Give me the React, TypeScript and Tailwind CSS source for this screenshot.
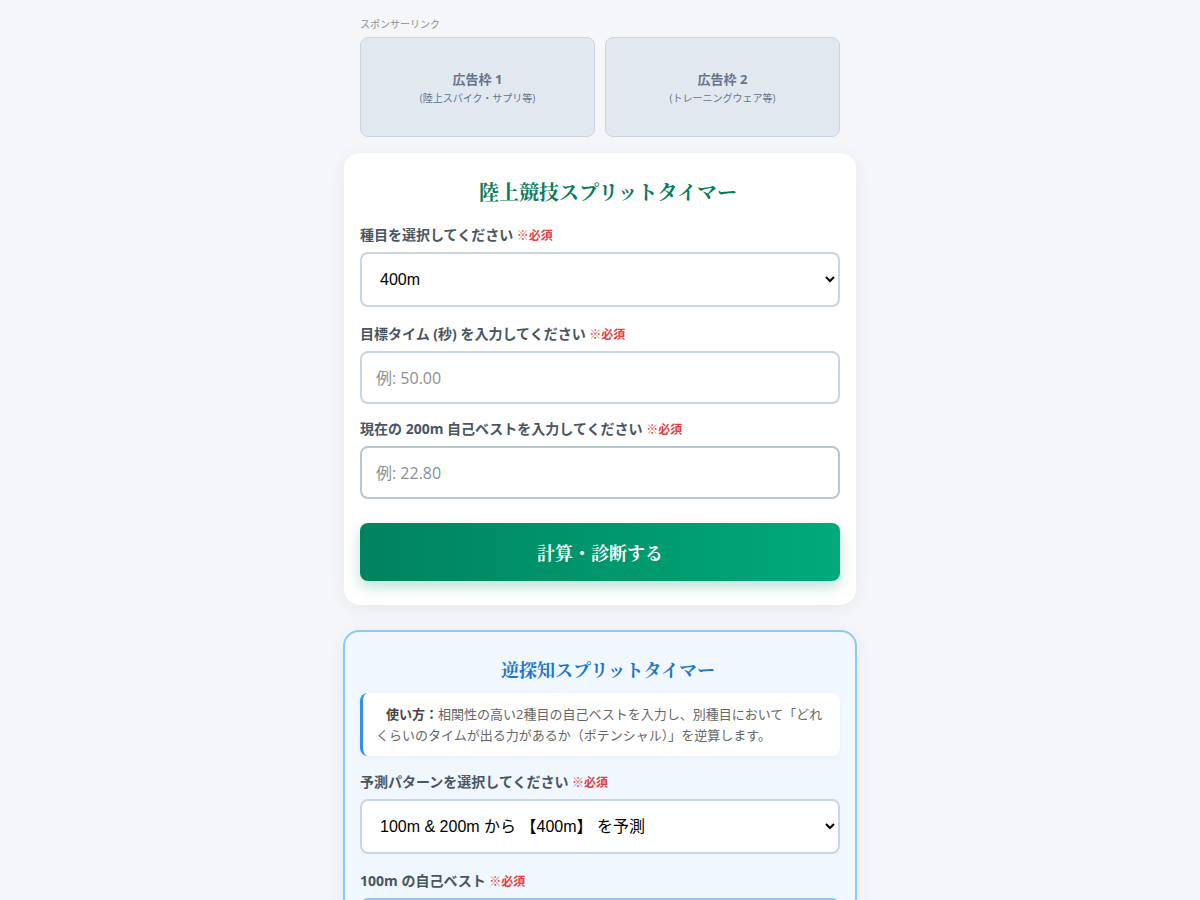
import { useState } from 'react';

const sans = "font-['Open_Sans','Noto_Sans_CJK_JP',sans-serif]";
const serif = "font-['Noto_Serif_CJK_JP','DejaVu_Serif','Noto_Sans_CJK_JP',serif]";

function Required() {
  return <span className="text-[12px] font-bold text-[#e53e3e]">※必須</span>;
}

function Label({ children }: { children: React.ReactNode }) {
  return (
    <label className="mb-[6px] block text-[14px] font-bold leading-[20px] text-[#4a5562]">
      {children} <Required />
    </label>
  );
}

function AdSlot({ title, sub }: { title: string; sub: string }) {
  return (
    <div className="flex h-[100px] flex-1 flex-col items-center justify-center rounded-lg border border-[#cbd5e1] bg-[#e2e8f0]">
      <div className="text-[13px] font-bold leading-[20px] text-[#64748b]">{title}</div>
      <div className="mt-[2px] text-[10px] leading-[14px] text-[#64748b]">{sub}</div>
    </div>
  );
}

export default function App() {
  const [event, setEvent] = useState('400m');
  const [target, setTarget] = useState('');
  const [pb200, setPb200] = useState('');
  const [pattern, setPattern] = useState('400');
  const [pb100, setPb100] = useState('');
  const [pb2, setPb2] = useState('');

  const fieldClass =
    "h-[53px] w-full rounded-lg border-2 bg-white px-[14px] text-[16px] text-[#333] outline-none placeholder:text-[#8a8f96]";
  const selectClass =
    "h-[55px] w-full rounded-lg border-2 border-[#cbd5e1] bg-white px-[14px] font-['Liberation_Sans','Noto_Sans_CJK_JP',sans-serif] text-[16px] text-black outline-none";

  return (
    <div className={`min-h-screen bg-[#f4f6f9] pb-10 ${sans}`}>
      <div className="mx-auto w-[512px]">
        {/* sponsor area */}
        <div className="px-4 pt-[17px]">
          <div className="mb-[6px] text-[10px] leading-[14px] text-[#8a8f96]">スポンサーリンク</div>
          <div className="flex gap-[10px]">
            <AdSlot title="広告枠 1" sub="(陸上スパイク・サプリ等)" />
            <AdSlot title="広告枠 2" sub="(トレーニングウェア等)" />
          </div>
        </div>

        {/* main timer */}
        <div className="mt-4 rounded-2xl bg-white px-4 pb-6 pt-[25px] shadow-[0_4px_20px_rgba(0,0,0,0.06)]">
          <h1 className={`mb-[19px] pl-4 text-center text-[20px] font-bold leading-[28px] text-[#0a7c5c] ${serif}`}>
            陸上競技スプリットタイマー
          </h1>

          <Label>種目を選択してください</Label>
          <select value={event} onChange={(e) => setEvent(e.target.value)} className={selectClass}>
            <option>100m</option>
            <option>200m</option>
            <option>400m</option>
          </select>

          <div className="mt-[17px]">
            <Label>目標タイム (秒) を入力してください</Label>
            <input
              value={target}
              onChange={(e) => setTarget(e.target.value)}
              placeholder="例: 50.00"
              className={`${fieldClass} border-[#cbd5e1]`}
            />
          </div>

          <div className="mt-[15px]">
            <Label>
              現在の <span className="font-bold">200m</span> 自己ベストを入力してください
            </Label>
            <input
              value={pb200}
              onChange={(e) => setPb200(e.target.value)}
              placeholder="例: 22.80"
              className={`${fieldClass} border-[#b7c6d3]`}
            />
          </div>

          <button
            className={`mt-[24px] h-[58px] w-full rounded-lg bg-gradient-to-r from-[#00835e] to-[#00aa7b] text-[18px] font-bold text-white shadow-[0_6px_14px_rgba(0,135,90,0.25)] ${serif}`}
          >
            計算・診断する
          </button>
        </div>

        {/* reverse timer */}
        <div className="-mx-[1px] mt-[25px] rounded-2xl border-2 border-[#90c8f5] bg-[#f0f7fe] px-[15px] pb-6 pt-[24px] shadow-[0_4px_20px_rgba(0,0,0,0.05)]">
          <h2 className={`mb-[11px] pl-4 text-center text-[18px] font-bold leading-[26px] text-[#1b75d0] ${serif}`}>
            逆探知スプリットタイマー
          </h2>

          <div className="rounded-lg border-l-[3px] border-[#2f8ff0] bg-white px-[13px] py-[10.5px] indent-[10px] text-[13px] leading-[21px] text-[#666] shadow-[0_2px_6px_rgba(0,0,0,0.03)]">
            <span className="font-bold text-[#444]">使い方：</span>
            相関性の高い2種目の自己ベストを入力し、別種目において「どれくらいのタイムが出る力があるか（ポテンシャル）」を逆算します。
          </div>

          <div className="mt-[16px]">
            <Label>予測パターンを選択してください</Label>
            <select value={pattern} onChange={(e) => setPattern(e.target.value)} className={selectClass}>
              <option value="400">100m &amp; 200m から 【400m】 を予測</option>
              <option value="100">200m &amp; 400m から 【100m】 を予測</option>
            </select>
          </div>

          <div className="mt-[17px]">
            <Label>100m の自己ベスト</Label>
            <input
              value={pb100}
              onChange={(e) => setPb100(e.target.value)}
              placeholder="例: 11.20"
              className={`${fieldClass} border-[#90c8f5]`}
            />
          </div>

          <div className="mt-[16px]">
            <Label>200m の自己ベスト</Label>
            <input
              value={pb2}
              onChange={(e) => setPb2(e.target.value)}
              placeholder="例: 22.80"
              className={`${fieldClass} border-[#90c8f5]`}
            />
          </div>

          <button
            className={`mt-[25px] h-[58px] w-full rounded-lg bg-gradient-to-r from-[#1565c0] to-[#2196f3] text-[18px] font-bold text-white ${serif}`}
          >
            逆算する
          </button>
        </div>
      </div>
    </div>
  );
}
